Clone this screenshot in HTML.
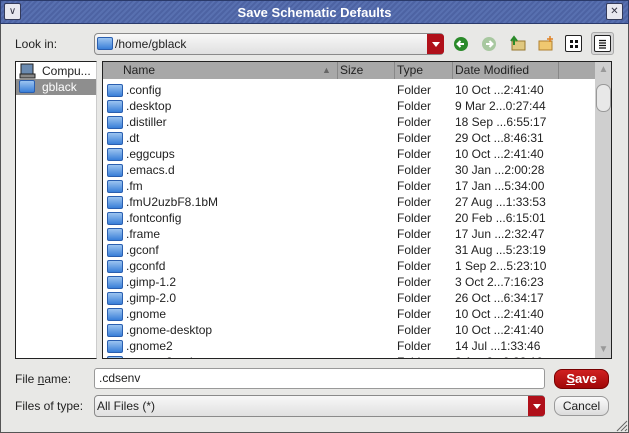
<!DOCTYPE html>
<html><head><meta charset="utf-8"><style>
*{box-sizing:border-box;margin:0;padding:0}
body{width:629px;height:433px;overflow:hidden;background:#e8e8e6;font-family:"Liberation Sans",sans-serif;font-size:12px;color:#222;position:relative}
.abs{position:absolute}
.title{left:0;top:0;width:629px;height:24px;background:repeating-linear-gradient(135deg,#4d63a3 0 2px,#5870b0 2px 4px);border:1px solid #2a3a6a;color:#fff;font-weight:bold;font-size:13px;text-align:center;line-height:23px}
.tbtn{top:3px;width:17px;height:17px;background:#e8e8f0;border:1px solid #333a5a;border-radius:2px;font-size:10px;line-height:15px;text-align:center;color:#334}
.frame{left:0;top:24px;width:629px;height:409px;border:1px solid #555;border-top:none}
.combo{border:1px solid #8a8a8a;border-radius:4px;background:linear-gradient(#f8f8f8,#e0e0e0)}
.arrow{background:#b0101a;border-radius:0 3px 3px 0}
.arrow:after{content:"";position:absolute;left:5px;top:8px;border:4px solid transparent;border-top:5px solid #fff}
.fold{display:inline-block;width:16px;height:13px;border-radius:2px;background:linear-gradient(#9cc4f0,#3a7fd8);border:1px solid #2a5fb0}
.absf{position:absolute}
.row{position:absolute;left:0;height:16px;line-height:16px;width:490px}
.row .fold{position:absolute;left:4px;top:2px}
.row .n{position:absolute;left:23px}
.row .t{position:absolute;left:294px}
.row .d{position:absolute;left:352px}
.hdr{top:0;height:17px;background:#a8a8a8;line-height:17px;color:#222;border-right:1px solid #888}
</style></head><body>
<div class="abs title">Save Schematic Defaults</div>
<div class="abs tbtn" style="left:4px">&#8744;</div>
<div class="abs tbtn" style="left:606px">&#10005;</div>
<div class="abs frame"></div>

<div class="abs" style="left:15px;top:37px">Look in:</div>
<div class="abs combo" style="left:94px;top:33px;width:350px;height:22px"></div>
<span class="fold absf" style="left:97px;top:37px"></span>
<div class="abs" style="left:115px;top:37px">/home/gblack</div>
<div class="abs arrow" style="left:427px;top:34px;width:17px;height:20px"></div>

<svg class="abs" style="left:452px;top:35px" width="18" height="18"><circle cx="9" cy="9" r="7" fill="#2a8a2a"/><path d="M12 9H6M8.5 6L5.5 9 8.5 12" stroke="#fff" stroke-width="2" fill="none"/></svg>
<svg class="abs" style="left:480px;top:35px" width="18" height="18"><circle cx="9" cy="9" r="7" fill="#a8c8a0"/><path d="M6 9H12M9.5 6L12.5 9 9.5 12" stroke="#fff" stroke-width="2" fill="none"/></svg>
<svg class="abs" style="left:509px;top:35px" width="18" height="18"><rect x="3" y="6" width="13" height="9" fill="#e0c880" stroke="#987830"/><path d="M5 10V3M2 6L5 2 8 6" stroke="#2a8a2a" stroke-width="2" fill="none"/></svg>
<svg class="abs" style="left:537px;top:35px" width="18" height="18"><rect x="2" y="6" width="13" height="9" fill="#f0c870" stroke="#b08030"/><path d="M13 1V7M10 4H16" stroke="#e08020" stroke-width="1.5"/></svg>
<div class="abs" style="left:565px;top:35px;width:17px;height:17px;border:1px solid #222;border-radius:2px;background:#fff"></div>
<svg class="abs" style="left:565px;top:35px" width="17" height="17"><rect x="5" y="5" width="3" height="3" fill="#111"/><rect x="10" y="5" width="3" height="3" fill="#111"/><rect x="5" y="10" width="3" height="3" fill="#111"/><rect x="10" y="10" width="3" height="3" fill="#111"/></svg>
<div class="abs" style="left:591px;top:32px;width:23px;height:23px;border:1px solid #aaa;border-radius:3px;background:#d8d8d8"></div>
<div class="abs" style="left:594px;top:35px;width:17px;height:17px;border:1px solid #222;border-radius:2px;background:#fff"></div>
<svg class="abs" style="left:594px;top:35px" width="17" height="17"><path d="M5 5.5H12M5 8H12M5 10.5H12M5 13H12" stroke="#111" stroke-width="1.2"/></svg>

<!-- left panel -->
<div class="abs" style="left:15px;top:61px;width:82px;height:298px;background:#fff;border:1px solid #222;border-right:1px solid #ccc"></div>
<svg class="abs" style="left:19px;top:63px" width="18" height="16"><rect x="2" y="1" width="12" height="10" fill="#6a8ab0" stroke="#222"/><rect x="1" y="11" width="15" height="4" fill="#888" stroke="#222"/></svg>
<div class="abs" style="left:42px;top:64px">Compu...</div>
<div class="abs" style="left:16px;top:79px;width:80px;height:16px;background:#8e8e8e"></div>
<span class="fold absf" style="left:19px;top:80px"></span>
<div class="abs" style="left:42px;top:79px;color:#fff;line-height:16px">gblack</div>

<!-- list -->
<div class="abs" style="left:102px;top:61px;width:510px;height:298px;background:#fff;border:1px solid #222;overflow:hidden">
 <div class="abs hdr" style="left:0;width:235px;padding-left:20px">Name<span style="position:absolute;left:219px;font-size:9px;color:#666">&#9650;</span></div>
 <div class="abs hdr" style="left:235px;width:57px;padding-left:2px">Size</div>
 <div class="abs hdr" style="left:292px;width:58px;padding-left:2px">Type</div>
 <div class="abs hdr" style="left:350px;width:106px;padding-left:2px">Date Modified</div>
 <div class="abs hdr" style="left:456px;width:36px;border:none"></div>
 <div class="abs" style="left:492px;top:0;width:17px;height:297px;background:#cfcfcf"></div>
 <div class="abs" style="left:493px;top:2px;width:15px;height:15px;color:#999;font-size:10px;text-align:center">&#9650;</div>
 <div class="abs" style="left:493px;top:22px;width:15px;height:28px;background:#e8e8e8;border:1px solid #999;border-radius:7px"></div>
 <div class="abs" style="left:493px;top:282px;width:15px;height:15px;color:#999;font-size:10px;text-align:center">&#9660;</div>
 <div class="abs" style="left:0;top:17px;width:492px;height:281px">
 <div class="row" style="top:3px"><span class="fold"></span><span class="n">.config</span><span class="t">Folder</span><span class="d">10 Oct ...2:41:40</span></div>
 <div class="row" style="top:19px"><span class="fold"></span><span class="n">.desktop</span><span class="t">Folder</span><span class="d">9 Mar 2...0:27:44</span></div>
 <div class="row" style="top:35px"><span class="fold"></span><span class="n">.distiller</span><span class="t">Folder</span><span class="d">18 Sep ...6:55:17</span></div>
 <div class="row" style="top:51px"><span class="fold"></span><span class="n">.dt</span><span class="t">Folder</span><span class="d">29 Oct ...8:46:31</span></div>
 <div class="row" style="top:67px"><span class="fold"></span><span class="n">.eggcups</span><span class="t">Folder</span><span class="d">10 Oct ...2:41:40</span></div>
 <div class="row" style="top:83px"><span class="fold"></span><span class="n">.emacs.d</span><span class="t">Folder</span><span class="d">30 Jan ...2:00:28</span></div>
 <div class="row" style="top:99px"><span class="fold"></span><span class="n">.fm</span><span class="t">Folder</span><span class="d">17 Jan ...5:34:00</span></div>
 <div class="row" style="top:115px"><span class="fold"></span><span class="n">.fmU2uzbF8.1bM</span><span class="t">Folder</span><span class="d">27 Aug ...1:33:53</span></div>
 <div class="row" style="top:131px"><span class="fold"></span><span class="n">.fontconfig</span><span class="t">Folder</span><span class="d">20 Feb ...6:15:01</span></div>
 <div class="row" style="top:147px"><span class="fold"></span><span class="n">.frame</span><span class="t">Folder</span><span class="d">17 Jun ...2:32:47</span></div>
 <div class="row" style="top:163px"><span class="fold"></span><span class="n">.gconf</span><span class="t">Folder</span><span class="d">31 Aug ...5:23:19</span></div>
 <div class="row" style="top:179px"><span class="fold"></span><span class="n">.gconfd</span><span class="t">Folder</span><span class="d">1 Sep 2...5:23:10</span></div>
 <div class="row" style="top:195px"><span class="fold"></span><span class="n">.gimp-1.2</span><span class="t">Folder</span><span class="d">3 Oct 2...7:16:23</span></div>
 <div class="row" style="top:211px"><span class="fold"></span><span class="n">.gimp-2.0</span><span class="t">Folder</span><span class="d">26 Oct ...6:34:17</span></div>
 <div class="row" style="top:227px"><span class="fold"></span><span class="n">.gnome</span><span class="t">Folder</span><span class="d">10 Oct ...2:41:40</span></div>
 <div class="row" style="top:243px"><span class="fold"></span><span class="n">.gnome-desktop</span><span class="t">Folder</span><span class="d">10 Oct ...2:41:40</span></div>
 <div class="row" style="top:259px"><span class="fold"></span><span class="n">.gnome2</span><span class="t">Folder</span><span class="d">14 Jul ...1:33:46</span></div>
 <div class="row" style="top:275px"><span class="fold"></span><span class="n">.gnome2_private</span><span class="t">Folder</span><span class="d">3 Apr 2...9:33:10</span></div>
 </div>
</div>

<!-- bottom -->
<div class="abs" style="left:15px;top:372px">File <u>n</u>ame:</div>
<div class="abs" style="left:94px;top:368px;width:451px;height:21px;background:#fff;border:1px solid #999;border-radius:3px;padding:2px 4px">.cdsenv</div>
<div class="abs" style="left:554px;top:369px;width:55px;height:20px;background:linear-gradient(#d02020,#a00808);border-radius:8px;border:1px solid #700;color:#fff;font-weight:bold;font-size:13px;text-align:center;line-height:18px"><u>S</u>ave</div>
<div class="abs" style="left:15px;top:399px">Files of type:</div>
<div class="abs combo" style="left:94px;top:395px;width:451px;height:22px"></div>
<div class="abs" style="left:97px;top:399px">All Files (*)</div>
<div class="abs arrow" style="left:528px;top:396px;width:17px;height:20px"></div>
<div class="abs" style="left:554px;top:396px;width:55px;height:20px;background:linear-gradient(#fafafa,#dcdcdc);border-radius:8px;border:1px solid #999;text-align:center;line-height:18px">Cancel</div>
<svg class="abs" style="left:616px;top:420px" width="12" height="12"><path d="M11 1L1 11M11 5L5 11M11 9L9 11" stroke="#666"/></svg>
</body></html>
